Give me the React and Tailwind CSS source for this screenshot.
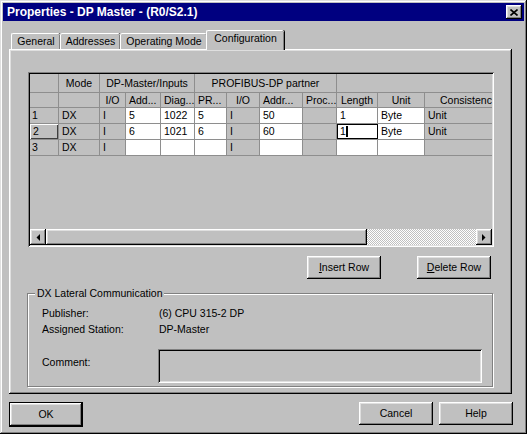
import React from 'react'

const raised = 'shadow-[inset_-1px_-1px_0_#000,inset_1px_1px_0_#fff,inset_-2px_-2px_0_#808080,inset_2px_2px_0_#dfdfdf]'
const sunken = 'shadow-[inset_1px_1px_0_#808080,inset_-1px_-1px_0_#fff,inset_2px_2px_0_#000,inset_-2px_-2px_0_#dfdfdf]'
const line = 'border-[#8e8e8e]'

const colW = ['w-[29px]', 'w-[41px]', 'w-[26px]', 'w-[35px]', 'w-[34px]', 'w-[32px]', 'w-[33px]', 'w-[43px]', 'w-[34px]', 'w-[41px]', 'w-[47px]', 'w-[67px]']
const editable = [0, 0, 0, 1, 1, 1, 0, 1, 0, 1, 1, 0]

const rows = [
  ['1', 'DX', 'I', '5', '1022', '5', 'I', '50', '', '1', 'Byte', 'Unit'],
  ['2', 'DX', 'I', '6', '1021', '6', 'I', '60', '', '1', 'Byte', 'Unit'],
  ['3', 'DX', 'I', '', '', '', 'I', '', '', '', '', ''],
]

// second header row: [text, centered]
const subHeads = [['', 0], ['', 0], ['I/O', 1], ['Add...', 0], ['Diag...', 0], ['PR...', 0], ['I/O', 1], ['Addr...', 0], ['Proc...', 0], ['Length', 1], ['Unit', 1]]

function Btn({ children, className = '' }) {
  return (
    <div className={`h-[23px] flex items-center justify-center bg-[#c0c0c0] ${raised} ${className}`}>
      {children}
    </div>
  )
}

function Arrow({ dir }) {
  return (
    <div className={`w-[16px] h-[16px] flex items-center justify-center bg-[#c0c0c0] ${raised}`}>
      <svg width="4" height="7" viewBox="0 0 4 7">
        {dir === 'left'
          ? <polygon points="4,0 4,7 0.5,3.5" fill="#000" />
          : <polygon points="0,0 0,7 3.5,3.5" fill="#000" />}
      </svg>
    </div>
  )
}

function Tab({ label, active, className }) {
  if (active) {
    return (
      <div className={`relative z-10 h-[20px] -mb-[1px] -ml-[1px] flex items-start justify-center pt-[2px] bg-[#c0c0c0] border-t border-l border-white rounded-tl-[2px] rounded-tr-[2px] shadow-[inset_-1px_0_0_#808080,1px_0_0_#000] ${className}`}>
        {label}
      </div>
    )
  }
  return (
    <div className={`h-[16px] flex items-center justify-center bg-[#c0c0c0] border-t border-l border-white rounded-tl-[2px] rounded-tr-[2px] shadow-[inset_-1px_0_0_#808080,1px_0_0_#000] ${className}`}>
      {label}
    </div>
  )
}

function Grid() {
  return (
    <div className={`w-[466px] h-[175px] p-[2px] ${sunken}`}>
      <div className="h-full flex flex-col bg-[#c0c0c0]">
        {/* header row 1 */}
        <div className={`flex h-[19px] border-b ${line}`}>
          <div className={`w-[29px] border-r ${line}`} />
          <div className={`w-[41px] border-r ${line} flex items-center justify-center`}>Mode</div>
          <div className={`w-[95px] border-r ${line} flex items-center justify-center`}>DP-Master/Inputs</div>
          <div className={`w-[142px] border-r ${line} flex items-center justify-center`}>PROFIBUS-DP partner</div>
          <div className="flex-1" />
        </div>
        {/* header row 2 */}
        <div className={`flex h-[15px] border-b ${line}`}>
          {subHeads.map(([t, c], i) => (
            <div key={i} className={`${colW[i]} border-r ${line} flex items-center whitespace-nowrap overflow-hidden ${c ? 'justify-center' : 'pl-[3px]'}`}>
              {t}
            </div>
          ))}
          <div className="w-[67px] overflow-hidden whitespace-nowrap pl-[15px] flex items-center">Consistency</div>
        </div>
        {rows.map((r, ri) => (
          <div key={ri} className={`flex h-[16px] border-b ${line}`}>
            {r.map((v, ci) => {
              if (ci === 0 && ri === 1) {
                return (
                  <div key={ci} className={`${colW[ci]} border-r ${line} flex items-center pl-[3px] shadow-[inset_1px_1px_0_#fff,inset_-1px_-1px_0_#404040]`}>
                    {v}
                  </div>
                )
              }
              if (ci === 9 && ri === 1) {
                return (
                  <div key={ci} className={`${colW[ci]} border border-black bg-white flex items-stretch pl-[2px]`}>
                    <span className="flex items-center">{v}</span>
                    <span className="w-[2px] bg-black my-[1px]" />
                  </div>
                )
              }
              const last = ci === r.length - 1
              return (
                <div key={ci} className={`${colW[ci]} ${last ? '' : `border-r ${line}`} flex items-center whitespace-nowrap overflow-hidden ${ci === 0 ? 'pl-[2px]' : 'pl-[3px]'} ${editable[ci] ? 'bg-white' : ''}`}>
                  {v}
                </div>
              )
            })}
          </div>
        ))}
        <div className="flex-1" />
        {/* horizontal scrollbar */}
        <div className="flex h-[16px]">
          <Arrow dir="left" />
          <div className={`w-[321px] bg-[#c0c0c0] ${raised}`} />
          <div className="flex-1 bg-[image:repeating-conic-gradient(#fff_0_25%,#c0c0c0_0_50%)] bg-[length:2px_2px]" />
          <Arrow dir="right" />
        </div>
      </div>
    </div>
  )
}

export default function App() {
  return (
    <div className={`w-[527px] h-[434px] p-[3px] bg-[#c0c0c0] text-black text-[10.5px] leading-none font-['Liberation_Sans',Arial,sans-serif] shadow-[inset_-1px_-1px_0_#000,inset_1px_1px_0_#dfdfdf,inset_-2px_-2px_0_#808080,inset_2px_2px_0_#fff] select-none`}>
      {/* title bar */}
      <div className="h-[18px] bg-[#000080] flex items-center pl-[4px] pr-[2px]">
        <span className="text-white font-bold text-[12px] flex-1">Properties - DP Master - (R0/S2.1)</span>
        <div className={`w-[16px] h-[14px] flex items-center justify-center bg-[#c0c0c0] ${raised}`}>
          <svg width="8" height="7" viewBox="0 0 8 7">
            <path d="M0.5 0.5 L7.5 6.5 M7.5 0.5 L0.5 6.5" stroke="#000" strokeWidth="1.6" />
          </svg>
        </div>
      </div>

      {/* tabs */}
      <div className="ml-[8px] mt-[9px] h-[19px] flex items-end">
        <Tab label="General" className="w-[49px]" />
        <Tab label="Addresses" className="w-[60px]" />
        <Tab label="Operating Mode" className="w-[87px]" />
        <Tab label="Configuration" active className="w-[78px]" />
      </div>

      {/* panel */}
      <div className={`ml-[6px] w-[503px] h-[345px] pt-[23px] pl-[19px] ${raised}`}>
        <Grid />
        <div className="flex mt-[9px]">
          <Btn className="ml-[279px] w-[74px]"><span><span className="underline">I</span>nsert Row</span></Btn>
          <Btn className="ml-[36px] w-[74px]"><span><span className="underline">D</span>elete Row</span></Btn>
        </div>

        {/* group box */}
        <div className="relative mt-[14px] -ml-[1px] w-[466px] h-[94px] border border-[#808080] shadow-[inset_1px_1px_0_#fff,1px_1px_0_#fff] pt-[11px] pl-[14px]">
          <span className="absolute -top-[6px] left-[7px] px-[2px] bg-[#c0c0c0]">DX Lateral Communication</span>
          <div className="flex h-[16px] items-center">
            <span className="w-[117px]">Publisher:</span>
            <span>(6) CPU 315-2 DP</span>
          </div>
          <div className="flex h-[16px] items-center">
            <span className="w-[117px]">Assigned Station:</span>
            <span>DP-Master</span>
          </div>
          <div className="flex mt-[12px]">
            <span className="w-[116px] pt-[8px]">Comment:</span>
            <div className={`w-[324px] h-[34px] ${sunken}`} />
          </div>
        </div>
      </div>

      {/* bottom buttons */}
      <div className="flex mt-[8px] ml-[6px]">
        <div className="border border-black">
          <Btn className="w-[72px] h-[21px]">OK</Btn>
        </div>
        <Btn className="ml-[276px] w-[74px]">Cancel</Btn>
        <Btn className="ml-[6px] w-[74px]">Help</Btn>
      </div>
    </div>
  )
}
